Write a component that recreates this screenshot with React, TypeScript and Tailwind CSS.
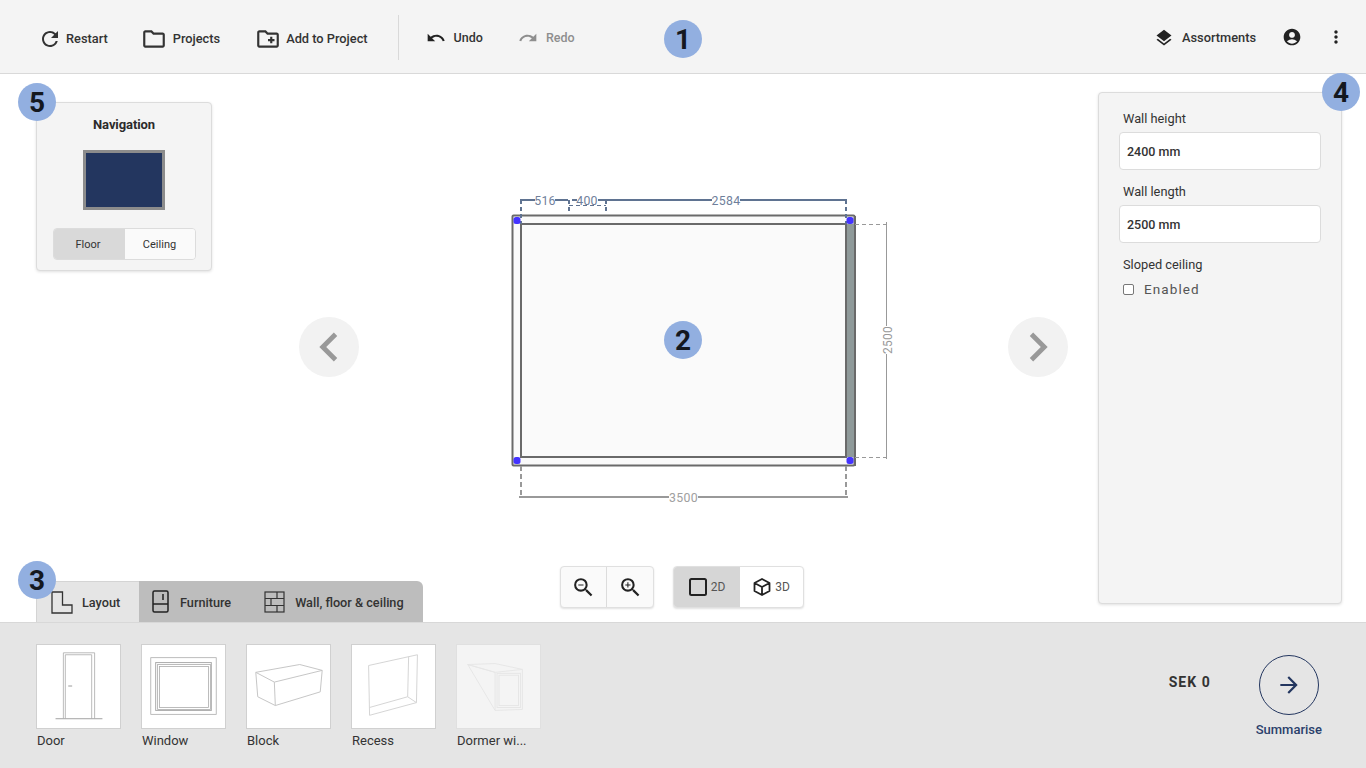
import { FC, ReactNode } from "react";
import {
  MdAccountCircle,
  MdArrowForward,
  MdChevronLeft,
  MdChevronRight,
  MdLayers,
  MdMoreVert,
  MdOutlineCreateNewFolder,
  MdOutlineFolder,
  MdRedo,
  MdRefresh,
  MdUndo,
  MdZoomIn,
  MdZoomOut,
} from "react-icons/md";

const Badge: FC<{ n: number; className: string }> = ({ n, className }) => (
  <div
    className={`absolute z-20 flex h-[38px] w-[38px] items-center justify-center rounded-full bg-[#92afe0] pt-[2px] text-[28px] font-bold text-[#14181f] ${className}`}
  >
    {n}
  </div>
);

const Thumb: FC<{ label: string; disabled?: boolean; children: ReactNode }> = ({
  label,
  disabled,
  children,
}) => (
  <div className="w-[85px]">
    <div
      className={`h-[85px] w-[85px] border ${
        disabled ? "border-[#e0e0e0] bg-[#f4f4f4]" : "border-[#d0d0d0] bg-white"
      }`}
    >
      <svg width="83" height="83" viewBox="0 0 85 85" fill="none">
        {children}
      </svg>
    </div>
    <p className="mt-[2px] pl-px text-[13px] leading-[20px] text-[#333]">{label}</p>
  </div>
);

const PlanDrawing: FC = () => (
  <svg width="520" height="320" viewBox="423 190 520 320" fill="none">
    {/* walls */}
    <rect x="512.5" y="215.5" width="342" height="250" rx="1" fill="#fafafa" stroke="#6a6a6a" strokeWidth="2" />
    <rect x="846" y="224" width="8" height="233" fill="#8f9a9a" />
    <rect x="521" y="224" width="325" height="233" fill="#fafafa" stroke="#6a6a6a" strokeWidth="2" />
    <line x1="855" y1="216" x2="855" y2="466" stroke="#6a6a6a" strokeWidth="2" />

    {/* top dimensions */}
    <g stroke="#5f7391" strokeWidth="2">
      <line x1="520" y1="200" x2="535" y2="200" />
      <line x1="555" y1="200" x2="568" y2="200" />
      <line x1="572" y1="200" x2="577" y2="200" />
      <line x1="598" y1="200" x2="606" y2="200" />
      <line x1="606" y1="200" x2="712" y2="200" />
      <line x1="740" y1="200" x2="847" y2="200" />
      <g strokeDasharray="4 3">
        <line x1="521" y1="200" x2="521" y2="224" />
        <line x1="846" y1="200" x2="846" y2="224" />
        <line x1="569" y1="200" x2="569" y2="214" />
        <line x1="606" y1="200" x2="606" y2="214" />
        <line x1="569" y1="205.5" x2="606" y2="205.5" strokeWidth="1" />
      </g>
    </g>
    <g fill="#6f7f9b" fontSize="12.3" textAnchor="middle" letterSpacing="0.3">
      <text x="545" y="205">516</text>
      <text x="587" y="205">400</text>
      <text x="726" y="205">2584</text>
    </g>

    {/* right dimension */}
    <g stroke="#999" strokeWidth="1">
      <line x1="855" y1="224.5" x2="886" y2="224.5" strokeDasharray="4 3" />
      <line x1="855" y1="457.5" x2="886" y2="457.5" strokeDasharray="4 3" />
      <line x1="886.5" y1="222" x2="886.5" y2="326" />
      <line x1="886.5" y1="354" x2="886.5" y2="459" />
    </g>
    <text x="888" y="340" fill="#999" fontSize="12" textAnchor="middle" transform="rotate(-90 888 340) translate(0 4)" letterSpacing="0.3">
      2500
    </text>

    {/* bottom dimension */}
    <g stroke="#999">
      <line x1="521" y1="466" x2="521" y2="497" strokeWidth="2" strokeDasharray="5 3" />
      <line x1="846" y1="466" x2="846" y2="497" strokeWidth="2" strokeDasharray="5 3" />
      <line x1="519" y1="497" x2="669" y2="497" strokeWidth="2" />
      <line x1="698" y1="497" x2="848" y2="497" strokeWidth="2" />
    </g>
    <text x="683.5" y="502" fill="#a0a0a0" fontSize="12.3" textAnchor="middle" letterSpacing="0.3">
      3500
    </text>

    {/* corners */}
    <g fill="#4433ff">
      <rect x="513.500" y="217" width="7" height="7" rx="2.500" />
      <rect x="846.500" y="217" width="7" height="7" rx="2.500" />
      <rect x="513.500" y="457" width="7" height="7" rx="2.500" />
      <rect x="846.500" y="457" width="7" height="7" rx="2.500" />
    </g>
  </svg>
);

const NavigationPanel: FC = () => (
  <div className="flex h-[169px] w-[176px] flex-col items-center rounded border border-[#dcdcdc] bg-[#f4f4f4] pt-[13px] shadow-[0_1px_3px_rgba(0,0,0,0.12)]">
    <h3 className="text-[13px] font-bold leading-[18px] tracking-[-0.1px] text-[#2b2b2b]">Navigation</h3>
    <div className="mt-4 h-[60px] w-[82px] border-[3px] border-[#8c8c8c] bg-[#23365f]" />
    <div className="mt-[18px] flex h-[32px] w-[143px] overflow-hidden rounded border border-[#dcdcdc] text-[11px] text-[#333]">
      <div className="flex w-[71px] items-center justify-center bg-[#d9d9d9] pr-[2px] pt-[2px]">Floor</div>
      <div className="flex flex-1 items-center justify-center bg-[#fafafa] pt-[2px]">Ceiling</div>
    </div>
  </div>
);

const PropsField: FC<{ label: string; value: string }> = ({ label, value }) => (
  <div className="mb-[11px]">
    <label className="block h-[20px] pl-1 pt-px text-[12.8px] leading-[20px] text-[#333]">{label}</label>
    <div className="mt-1 flex h-[38px] items-center rounded border border-[#dcdcdc] bg-white pl-[7px] pt-[3px] text-[12.5px] font-medium text-[#333]">
      {value}
    </div>
  </div>
);

const App: FC = () => {
  return (
    <div className="relative flex h-[768px] w-[1366px] flex-col overflow-hidden bg-white font-['Roboto',sans-serif]">
      <Badge n={1} className="left-[664px] top-[20px]" />
      <Badge n={2} className="left-[664px] top-[321px]" />
      <Badge n={3} className="left-[18px] top-[561px]" />
      <Badge n={4} className="left-[1322px] top-[73px]" />
      <Badge n={5} className="left-[18px] top-[83px]" />

      {/* toolbar */}
      <header className="flex h-[74px] shrink-0 items-center border-b border-[#d9d9d9] bg-[#f4f4f4] pl-[38px] pr-[20px] pt-[2px] text-[12.8px] font-medium text-[#333]">
        <button className="flex items-center gap-1 pt-[2px]">
          <MdRefresh size={24} />
          Restart
        </button>
        <button className="ml-[33px] flex items-center gap-[6px] pt-[2px]">
          <MdOutlineFolder size={26} />
          Projects
        </button>
        <button className="ml-[35px] flex items-center gap-[5px] pt-[2px]">
          <MdOutlineCreateNewFolder size={26} />
          Add to Project
        </button>
        <div className="ml-[30px] h-[45px] w-px bg-[#d9d9d9]" />
        <button className="ml-[27px] flex items-center gap-2 pt-px text-[12.5px]">
          <MdUndo size={20} className="text-[#222]" />
          Undo
        </button>
        <button className="ml-[35px] flex items-center gap-2 pt-px text-[12.5px] text-[#8e8e8e]">
          <MdRedo size={20} />
          Redo
        </button>
        <button className="ml-auto flex items-center gap-2 pr-px">
          <MdLayers size={20} className="text-[#222]" />
          Assortments
        </button>
        <MdAccountCircle size={20} className="mb-px ml-[25px] text-[#222]" />
        <MdMoreVert size={20} className="mb-px ml-6 text-[#222]" />
      </header>

      {/* work area */}
      <main className="relative flex flex-1">
        <div className="flex w-[423px] shrink-0 flex-col justify-between pl-9 pt-7">
          <NavigationPanel />
          <div className="flex h-[41px] text-[12.7px] font-medium text-[#333]">
            <div className="flex w-[103px] items-center border-l border-t border-[#d4d4d4] bg-[#e5e5e5] pl-[14px]">
              <svg width="22" height="23" viewBox="0 0 22 23" fill="none" stroke="#333" strokeWidth="1.3">
                <path d="M1 1h10.500v13H21v8H1z" />
              </svg>
              <span className="ml-[9px] pt-px">Layout</span>
            </div>
            <div className="flex flex-1 items-center rounded-tr-md bg-[#bdbdbd]">
              <svg className="ml-[13px]" width="17" height="23" viewBox="0 0 17 23" fill="none" stroke="#222" strokeWidth="1.5">
                <rect x="1" y="1" width="15" height="21" rx="1.500" />
                <path d="M1 14h15M11 4v6" />
              </svg>
              <span className="ml-[11px] pt-[2px]">Furniture</span>
              <svg className="ml-[33px]" width="21" height="22" viewBox="0 0 21 22" fill="none" stroke="#333" strokeWidth="1.2">
                <rect x="1" y="1" width="19" height="20" />
                <path d="M1 7.500h19M1 14.500h19M13 1v6.500M7 7.500v7M13 14.500v6.500" />
              </svg>
              <span className="ml-[10px] pt-[2px]">Wall, floor &amp; ceiling</span>
            </div>
          </div>
        </div>

        <div className="flex w-[520px] shrink-0 flex-col items-center justify-between pb-[14px] pt-[116px]">
          <PlanDrawing />
          <div className="mr-[2px] flex gap-[19px]">
            <div className="flex h-[42px] w-[94px] rounded border border-[#e0e0e0] bg-[#fafafa] text-[#222] shadow-[0_1px_2px_rgba(0,0,0,0.12)]">
              <div className="flex w-[46px] items-center justify-center border-r border-[#dcdcdc]">
                <MdZoomOut size={25} />
              </div>
              <div className="flex flex-1 items-center justify-center">
                <MdZoomIn size={25} />
              </div>
            </div>
            <div className="flex h-[42px] w-[131px] overflow-hidden rounded border border-[#e0e0e0] bg-white text-[12px] text-[#555] shadow-[0_1px_2px_rgba(0,0,0,0.12)]">
              <div className="flex w-[66px] items-center justify-center gap-1 bg-[#d6d6d6]">
                <svg width="18" height="18" viewBox="0 0 18 18" fill="none" stroke="#222" strokeWidth="2">
                  <rect x="1" y="1" width="16" height="16" rx="1.500" />
                </svg>
                2D
              </div>
              <div className="flex flex-1 items-center justify-center gap-1">
                <svg width="18" height="18" viewBox="0 0 18 18" fill="none" stroke="#222" strokeWidth="1.8" strokeLinejoin="round">
                  <path d="M9 1l7.500 4v8L9 17l-7.500-4V5zM1.500 5L9 9l7.500-4M9 9v8" />
                </svg>
                3D
              </div>
            </div>
          </div>
        </div>

        <div className="flex flex-1 justify-end pr-6 pt-[18px]">
          <aside className="h-[512px] w-[244px] rounded border border-[#dcdcdc] bg-[#f4f4f4] px-5 pt-[15px] shadow-[0_1px_3px_rgba(0,0,0,0.12)]">
            <PropsField label="Wall height" value="2400 mm" />
            <PropsField label="Wall length" value="2500 mm" />
            <p className="h-[20px] pl-1 pt-px text-[12.8px] leading-[20px] text-[#333]">Sloped ceiling</p>
            <div className="mt-[5px] flex items-center pl-1">
              <span className="h-[11px] w-[11px] rounded-[2px] border border-[#777] bg-white" />
              <span className="ml-[10px] text-[13.5px] tracking-[1.1px] text-[#555]">Enabled</span>
            </div>
          </aside>
        </div>

        <button className="absolute left-[299px] top-[243px] flex h-[60px] w-[60px] items-center justify-center rounded-full bg-[#f2f2f2] text-[#999]">
          <MdChevronLeft size={58} />
        </button>
        <button className="absolute left-[1008px] top-[243px] flex h-[60px] w-[60px] items-center justify-center rounded-full bg-[#f2f2f2] text-[#999]">
          <MdChevronRight size={58} />
        </button>
      </main>

      {/* item tray */}
      <footer className="flex h-[146px] shrink-0 justify-between border-t border-[#d8d8d8] bg-[#e5e5e5] pl-9 pr-[44px] pt-[21px]">
        <div className="flex gap-5">
          <Thumb label="Door">
            <g stroke="#a8a8a8" strokeWidth="0.8">
              <path d="M27 75V8h32v67M29 75V10h27v65" />
              <path d="M19 75.500h48" stroke="#888" />
              <path d="M32 42h4" stroke="#aaa" strokeWidth="1.2" />
            </g>
          </Thumb>
          <Thumb label="Window">
            <g stroke="#aaa" strokeWidth="0.8">
              <rect x="9" y="13" width="67" height="58" />
              <rect x="14" y="18" width="57" height="49" strokeWidth="1" />
              <rect x="16" y="20" width="54" height="46" />
              <rect x="18" y="22" width="50" height="42" />
            </g>
          </Thumb>
          <Thumb label="Block">
            <path
              d="M9 28L54 20L77 26L28 38ZM9 28L11 53L29 62L75 48L77 26M28 38L29 62"
              stroke="#c4c4c4"
              strokeWidth="1"
            />
          </Thumb>
          <Thumb label="Recess">
            <path
              d="M17 21L67 10L66 59L18 72ZM18 64L57 53L66 59M57 53L58 12"
              stroke="#d4d4d4"
              strokeWidth="1"
            />
          </Thumb>
          <Thumb label="Dormer wi..." disabled>
            <g stroke="#e6e6e6" strokeWidth="1">
              <path d="M11 20L39 19L67 25V66L39 67V28ZM11 20L39 67M11 20L39 28L67 25" />
              <rect x="41" y="29" width="24" height="35" />
              <rect x="43" y="31" width="20" height="31" />
            </g>
          </Thumb>
        </div>
        <div className="flex items-start">
          <span className="mt-[28px] text-[14px] font-bold tracking-[1px] text-[#333]">SEK 0</span>
          <div className="ml-[45px] mt-[11px] flex flex-col items-center">
            <button className="flex h-[60px] w-[60px] items-center justify-center rounded-full border border-[#23365f] text-[#23365f]">
              <MdArrowForward size={26} />
            </button>
            <span className="mt-[6px] text-[13px] font-medium leading-[18px] text-[#2b3f6b]">Summarise</span>
          </div>
        </div>
      </footer>
    </div>
  );
};

export default App;
